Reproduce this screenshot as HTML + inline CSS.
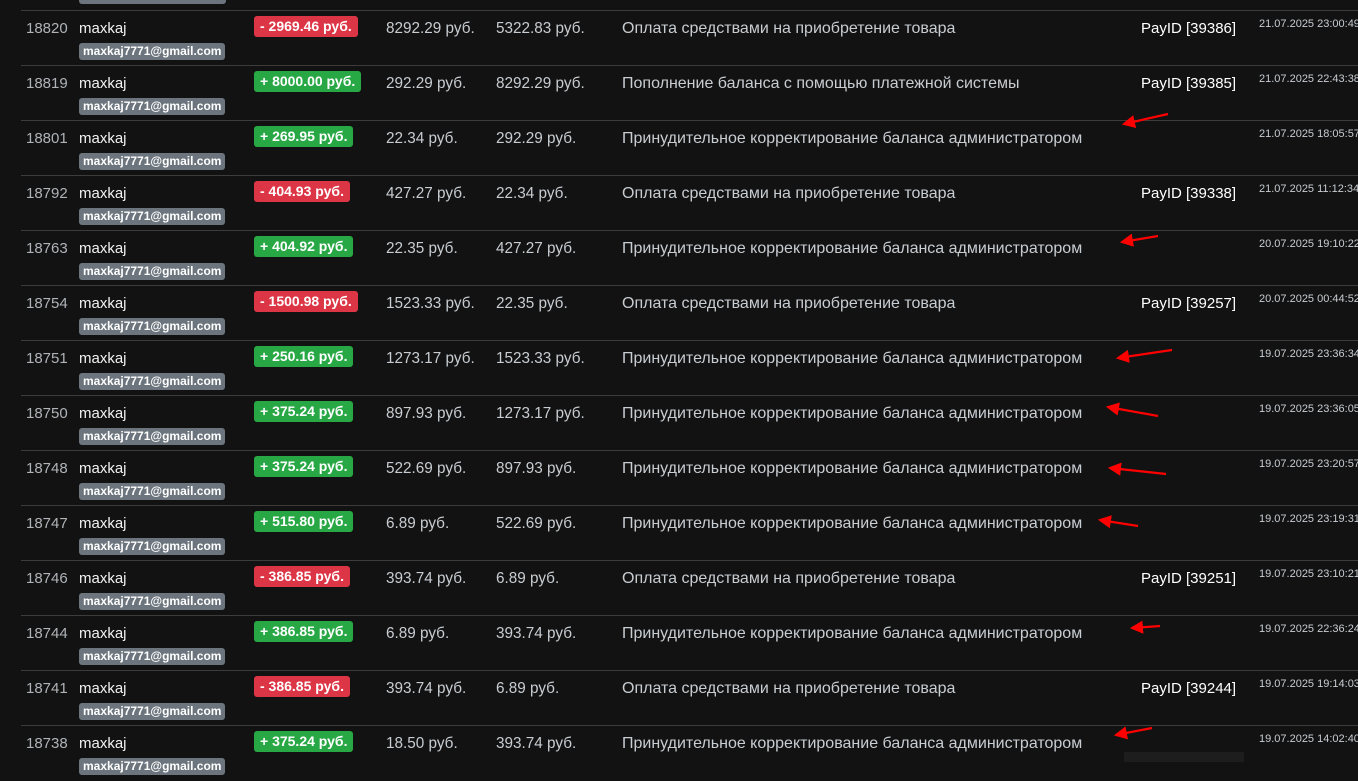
<!DOCTYPE html>
<html><head><meta charset="utf-8"><style>
body{margin:0;width:1358px;height:762px;background:#121212;overflow:hidden;position:relative;font-family:"Liberation Sans","DejaVu Sans",sans-serif}
.r{position:absolute;left:21px;right:0;height:55px;border-top:1px solid #3c3c3c}
.r div{position:absolute;white-space:nowrap}
.id{left:5px;top:9px;font-size:15px;color:#b0b4b8}
.nm{left:58px;top:9px;font-size:15px;color:#f2f2f2}
.em{left:58px;top:32px;font-size:12px;font-weight:bold;color:#fff;background:#6c757d;border-radius:3px;padding:1px 4px;line-height:15px}
.am{left:233px;top:5px;font-size:14px;font-weight:bold;color:#fff;border-radius:3px;padding:3px 6px;line-height:15px}
.m{background:#dc3545}.p{background:#28a745}
.c1{left:365px;top:9px;font-size:15.3px;color:#c8cdd2}
.c2{left:475px;top:9px;font-size:15.3px;color:#c8cdd2}
.ds{left:601px;top:9px;font-size:16px;color:#c8cdd2}
.pid{left:1120px;top:9px;font-size:15px;color:#fff}
.dt{left:1238px;top:7px;font-size:11px;color:#c8cdd2}
</style></head><body>
<div style="position:absolute;left:79px;top:-10px;width:147px;height:14px;background:#6c757d;border-radius:3px"></div>
<div style="position:absolute;left:1124px;top:752px;width:120px;height:10px;background:#1d1d1d"></div>
<div class="r" style="top:10px"><div class="id">18820</div><div class="nm">maxkaj</div><div class="em">maxkaj7771@gmail.com</div><div class="am m">- 2969.46 руб.</div><div class="c1">8292.29 руб.</div><div class="c2">5322.83 руб.</div><div class="ds">Оплата средствами на приобретение товара</div><div class="pid">PayID [39386]</div><div class="dt">21.07.2025 23:00:49</div></div>
<div class="r" style="top:65px"><div class="id">18819</div><div class="nm">maxkaj</div><div class="em">maxkaj7771@gmail.com</div><div class="am p">+ 8000.00 руб.</div><div class="c1">292.29 руб.</div><div class="c2">8292.29 руб.</div><div class="ds">Пополнение баланса с помощью платежной системы</div><div class="pid">PayID [39385]</div><div class="dt">21.07.2025 22:43:38</div></div>
<div class="r" style="top:120px"><div class="id">18801</div><div class="nm">maxkaj</div><div class="em">maxkaj7771@gmail.com</div><div class="am p">+ 269.95 руб.</div><div class="c1">22.34 руб.</div><div class="c2">292.29 руб.</div><div class="ds">Принудительное корректирование баланса администратором</div><div class="dt">21.07.2025 18:05:57</div></div>
<div class="r" style="top:175px"><div class="id">18792</div><div class="nm">maxkaj</div><div class="em">maxkaj7771@gmail.com</div><div class="am m">- 404.93 руб.</div><div class="c1">427.27 руб.</div><div class="c2">22.34 руб.</div><div class="ds">Оплата средствами на приобретение товара</div><div class="pid">PayID [39338]</div><div class="dt">21.07.2025 11:12:34</div></div>
<div class="r" style="top:230px"><div class="id">18763</div><div class="nm">maxkaj</div><div class="em">maxkaj7771@gmail.com</div><div class="am p">+ 404.92 руб.</div><div class="c1">22.35 руб.</div><div class="c2">427.27 руб.</div><div class="ds">Принудительное корректирование баланса администратором</div><div class="dt">20.07.2025 19:10:22</div></div>
<div class="r" style="top:285px"><div class="id">18754</div><div class="nm">maxkaj</div><div class="em">maxkaj7771@gmail.com</div><div class="am m">- 1500.98 руб.</div><div class="c1">1523.33 руб.</div><div class="c2">22.35 руб.</div><div class="ds">Оплата средствами на приобретение товара</div><div class="pid">PayID [39257]</div><div class="dt">20.07.2025 00:44:52</div></div>
<div class="r" style="top:340px"><div class="id">18751</div><div class="nm">maxkaj</div><div class="em">maxkaj7771@gmail.com</div><div class="am p">+ 250.16 руб.</div><div class="c1">1273.17 руб.</div><div class="c2">1523.33 руб.</div><div class="ds">Принудительное корректирование баланса администратором</div><div class="dt">19.07.2025 23:36:34</div></div>
<div class="r" style="top:395px"><div class="id">18750</div><div class="nm">maxkaj</div><div class="em">maxkaj7771@gmail.com</div><div class="am p">+ 375.24 руб.</div><div class="c1">897.93 руб.</div><div class="c2">1273.17 руб.</div><div class="ds">Принудительное корректирование баланса администратором</div><div class="dt">19.07.2025 23:36:05</div></div>
<div class="r" style="top:450px"><div class="id">18748</div><div class="nm">maxkaj</div><div class="em">maxkaj7771@gmail.com</div><div class="am p">+ 375.24 руб.</div><div class="c1">522.69 руб.</div><div class="c2">897.93 руб.</div><div class="ds">Принудительное корректирование баланса администратором</div><div class="dt">19.07.2025 23:20:57</div></div>
<div class="r" style="top:505px"><div class="id">18747</div><div class="nm">maxkaj</div><div class="em">maxkaj7771@gmail.com</div><div class="am p">+ 515.80 руб.</div><div class="c1">6.89 руб.</div><div class="c2">522.69 руб.</div><div class="ds">Принудительное корректирование баланса администратором</div><div class="dt">19.07.2025 23:19:31</div></div>
<div class="r" style="top:560px"><div class="id">18746</div><div class="nm">maxkaj</div><div class="em">maxkaj7771@gmail.com</div><div class="am m">- 386.85 руб.</div><div class="c1">393.74 руб.</div><div class="c2">6.89 руб.</div><div class="ds">Оплата средствами на приобретение товара</div><div class="pid">PayID [39251]</div><div class="dt">19.07.2025 23:10:21</div></div>
<div class="r" style="top:615px"><div class="id">18744</div><div class="nm">maxkaj</div><div class="em">maxkaj7771@gmail.com</div><div class="am p">+ 386.85 руб.</div><div class="c1">6.89 руб.</div><div class="c2">393.74 руб.</div><div class="ds">Принудительное корректирование баланса администратором</div><div class="dt">19.07.2025 22:36:24</div></div>
<div class="r" style="top:670px"><div class="id">18741</div><div class="nm">maxkaj</div><div class="em">maxkaj7771@gmail.com</div><div class="am m">- 386.85 руб.</div><div class="c1">393.74 руб.</div><div class="c2">6.89 руб.</div><div class="ds">Оплата средствами на приобретение товара</div><div class="pid">PayID [39244]</div><div class="dt">19.07.2025 19:14:03</div></div>
<div class="r" style="top:725px"><div class="id">18738</div><div class="nm">maxkaj</div><div class="em">maxkaj7771@gmail.com</div><div class="am p">+ 375.24 руб.</div><div class="c1">18.50 руб.</div><div class="c2">393.74 руб.</div><div class="ds">Принудительное корректирование баланса администратором</div><div class="dt">19.07.2025 14:02:40</div></div>
<svg width="1358" height="762" style="position:absolute;left:0;top:0">
<defs><marker id="a" markerWidth="6" markerHeight="6" refX="1" refY="3" orient="auto"><path d="M6,0 L0,3 L6,6 Z" fill="#f00"/></marker></defs>
<g stroke="#f00" stroke-width="2.2" marker-start="url(#a)">
<line x1="1124" y1="124" x2="1168" y2="114"/>
<line x1="1122" y1="242" x2="1158" y2="236"/>
<line x1="1118" y1="358" x2="1172" y2="350"/>
<line x1="1108" y1="407" x2="1158" y2="416"/>
<line x1="1110" y1="468" x2="1166" y2="474"/>
<line x1="1100" y1="520" x2="1138" y2="526"/>
<line x1="1132" y1="628" x2="1160" y2="626"/>
<line x1="1116" y1="735" x2="1152" y2="728"/>
</g></svg>
</body></html>
